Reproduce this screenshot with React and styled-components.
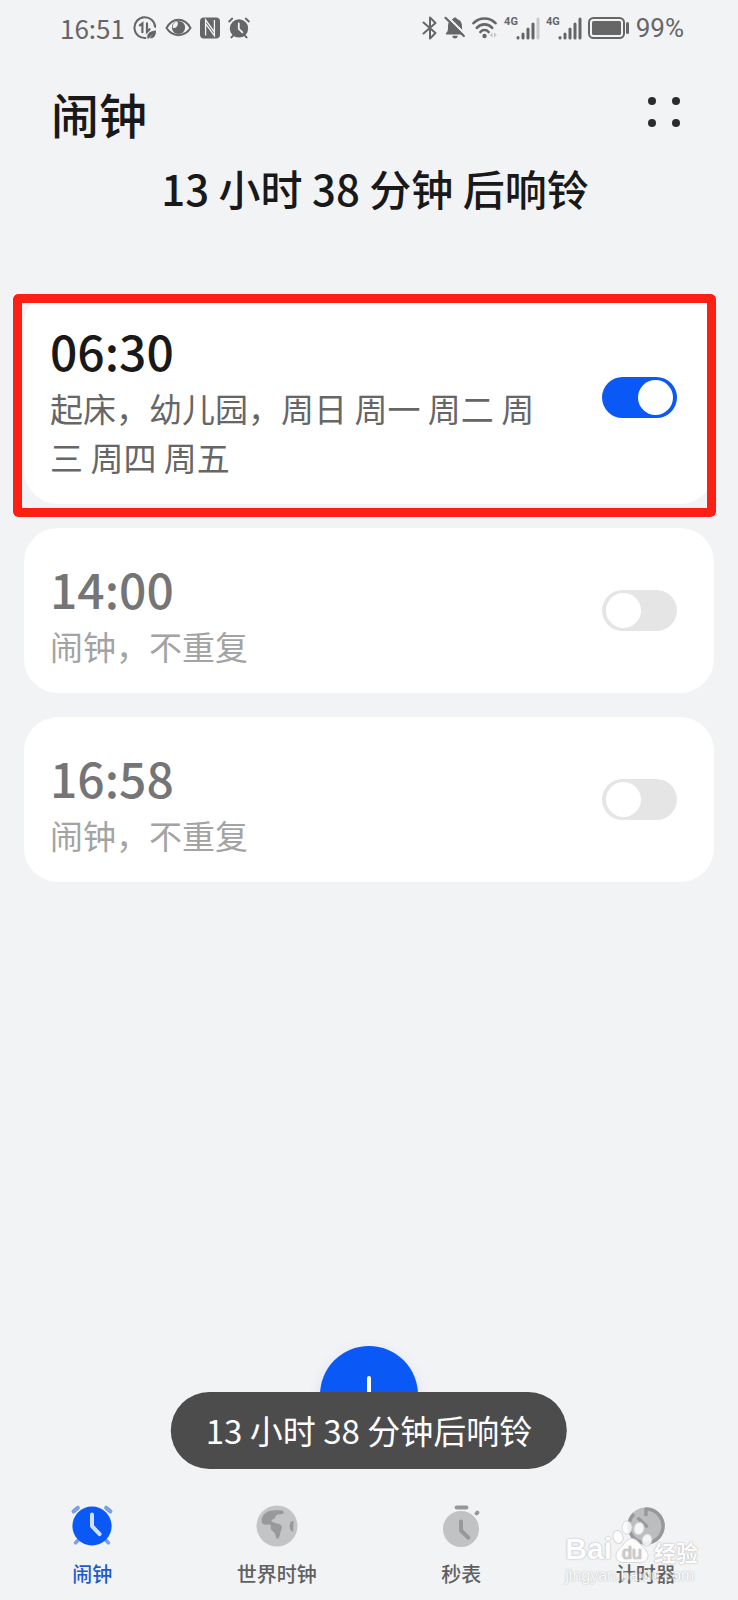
import { useState } from 'react';
import styled, { createGlobalStyle } from 'styled-components';

let GlobalStyle = createGlobalStyle`
    :root{
        --page_color:#f2f3f5;
        --accent_color:#0a59f7;
        --text_color:#191919;
        --status_color:#666666;
        --main_font:"Noto Sans CJK SC", "Noto Sans", sans-serif;
    }

    *{
        box-sizing:border-box;
    }

    body{
        margin:0;
        background:var(--page_color);
        color:var(--text_color);
        font-family:var(--main_font);
    }

    button{
        padding:0;
        border:none;
        background:none;
        color:inherit;
        font-family:inherit;
        cursor:pointer;
    }
`

let initialAlarms = [
    { id: 1, time: '06:30', label: '起床，幼儿园，周日 周一 周二 周三 周四 周五', on: true, marked: true },
    { id: 2, time: '14:00', label: '闹钟，不重复', on: false },
    { id: 3, time: '16:58', label: '闹钟，不重复', on: false },
];

/* status bar icons */

let DataSaverIcon = () => (
    <svg width='24' height='24' viewBox='0 0 24 24' fill='none' stroke='currentColor' strokeWidth='2' strokeLinecap='round'>
        <path d='M22.2 10.800A10.4 10.4 0 1 0 12.400 22' />
        <path d='M6.800 9.400 9.400 7.400v8.800M14 7.400v8.400l2.600-2.600' strokeWidth='2.200' />
        <path d='M14.400 22.400c-1-5 2.200-7.600 8.600-8 .2 5.200-2.200 8.400-6.400 7.800l3.200-4-4.400 4.600z' fill='currentColor' stroke='none' />
    </svg>
)

let EyeIcon = () => (
    <svg width='27' height='20' viewBox='0 0 27 20'>
        <path d='M1.500 10C7.500-1 19.500-1 25.500 10C19.500 19.500 7.500 19.500 1.500 10Z' fill='none' stroke='currentColor' strokeWidth='2' strokeLinejoin='round' />
        <circle cx='13.500' cy='9.500' r='6.600' fill='currentColor' />
        <path d='M12.400 3.600a4.400 4.400 0 0 1-4.600 6.400 6 6 0 0 1 4.600-6.400z' fill='#f2f3f5' />
    </svg>
)

let NfcIcon = () => (
    <svg width='20' height='22' viewBox='0 0 20 22'>
        <rect width='20' height='21' y='0.500' rx='4' fill='currentColor' />
        <path d='M5.600 18.500V2.800l8.800 12.400M14.400 3v15.700L5.600 6.600' fill='none' stroke='#f2f3f5' strokeWidth='1.300' />
    </svg>
)

let AlarmStatusIcon = () => (
    <svg width='22' height='22' viewBox='0 0 22 22' fill='none' stroke='currentColor' strokeLinecap='round' strokeWidth='2'>
        <circle cx='11' cy='11.400' r='9.200' fill='currentColor' stroke='none' />
        <path d='M1.200 4.400 4.200 1.600M20.800 4.400l-3-2.800M3.400 20.400l2-2M18.600 20.400l-2-2' />
        <path d='M10.800 6.400v5.400l3.600 3.600' stroke='#f2f3f5' strokeWidth='1.800' />
    </svg>
)

let BluetoothIcon = () => (
    <svg width='16' height='24' viewBox='0 0 16 24' fill='none' stroke='currentColor' strokeWidth='2' strokeLinejoin='round' strokeLinecap='round'>
        <path d='M1.500 6.500 13.500 17 8 22.500V1.500L13.500 7 1.500 17.500' />
    </svg>
)

let BellOffIcon = () => (
    <svg width='22' height='24' viewBox='0 0 22 24'>
        <path d='M3 18.500c-1.200 0-1.400-1-.6-1.800 1.400-1.400 1.600-2.600 1.600-6C4 6 6 3.800 9 3c.4-2 3.600-2 4 0 3.200.8 5 3.200 5 7.700 0 3.400.2 4.600 1.600 6 .8.800.6 1.800-.6 1.800z' fill='currentColor' />
        <path d='M8.400 19.800h5.200a2.600 2.600 0 0 1-5.200 0z' fill='currentColor' />
        <path d='M3.500.8 21.500 18.600' stroke='#f2f3f5' strokeWidth='2.200' />
        <path d='M1.500 1.800 19.800 20' stroke='currentColor' strokeWidth='2.200' strokeLinecap='round' />
    </svg>
)

let WifiIcon = () => (
    <svg width='26' height='24' viewBox='0 0 26 24' fill='none' stroke='currentColor' strokeWidth='2.600' strokeLinecap='round'>
        <path d='M1.500 7.200C7.500 1 17.500 1 23.500 7.200M4.800 11.800c4.200-4.600 11.200-4.600 15.400 0M8.400 16c2.200-2.600 6-2.600 8.200 0' />
        <circle cx='12.500' cy='20' r='2.200' fill='currentColor' stroke='none' />
        <path d='M20.500 16.400 17.600 19l2.900 2.600zM22 16.400l2.900 2.600-2.900 2.600z' fill='#c4c5c6' stroke='none' />
    </svg>
)

let SignalIcon = ({ weak }) => (
    <svg width='24' height='23' viewBox='0 0 24 23' stroke='currentColor' strokeWidth='3' strokeLinecap='round'>
        <path d='M2 20.500v.5M7 17v4M12 12v9M17 7v14' />
        <path d='M22 2v19' stroke={weak ? '#c9cacb' : 'currentColor'} />
    </svg>
)

let BatteryIcon = () => (
    <svg width='42' height='24' viewBox='0 0 42 24'>
        <rect x='1' y='2' width='35' height='20' rx='4.500' fill='none' stroke='currentColor' strokeWidth='2' />
        <rect x='4' y='5' width='29' height='14' rx='1.500' fill='currentColor' />
        <path d='M39.500 7.500v9' stroke='currentColor' strokeWidth='3' strokeLinecap='round' />
    </svg>
)

/* tab icons */

let AlarmTabIcon = () => (
    <svg width='44' height='44' viewBox='0 0 44 44' fill='none' strokeLinecap='round'>
        <path d='M3.600 7.400l4.200-3.600M40.400 7.400l-4.200-3.600' stroke='#7d9fe9' strokeWidth='4.200' />
        <path d='M5.600 38.800l4-4M38.400 38.800l-4-4' stroke='#7d9fe9' strokeWidth='3.600' />
        <circle cx='22' cy='22' r='19.600' fill='#0a59f7' />
        <path d='M22 10.500v11.600l7.600 8' stroke='#cfe0fb' strokeWidth='4' strokeLinejoin='round' />
    </svg>
)

let GlobeTabIcon = () => (
    <svg width='44' height='44' viewBox='0 0 44 44'>
        <circle cx='22' cy='22' r='20.500' fill='#c3c4c5' />
        <path d='M7 19c-1.600-5 2-10.400 7.600-12 3.600-1 8-.8 12.400-.4 2.400.4 2.400 3 0 3.400l-4.600.6c-1.800.4-1.400 2.400-2.600 3.600-1.200 1.200-3 .8-3.200 2.400-.2 1.400 1.800 1.200 2.600 2 1.400 1.200 4 .8 5.800 1.800 1.800.8 2.400 3 1.400 5-1.200 2.400-1 5-2.400 8-.8 1.800-2.400 1.800-3-.2-.6-2.400-1-4-2.800-5.600-2-1.800-3-3.200-2.400-5.200.4-1.400-1-2-3-1.800-2.600.2-5 .2-5.800-1.600z' fill='#98999a' />
        <path d='M38.600 17c-2.400-.8-4.200 2.400-4 5.600.2 3 2 5.400 3.600 5z' fill='#98999a' />
    </svg>
)

let StopwatchTabIcon = () => (
    <svg width='44' height='44' viewBox='0 0 44 44' fill='none' strokeLinecap='round'>
        <circle cx='22' cy='25' r='18' fill='#c1c2c3' />
        <path d='M17.600 3.600h9.800' stroke='#97989a' strokeWidth='4' />
        <path d='M37.600 9.400l.8-.8' stroke='#97989a' strokeWidth='4' />
        <path d='M22 17.500v9l7.200 7' stroke='#97989a' strokeWidth='4' strokeLinejoin='round' />
    </svg>
)

let TimerTabIcon = () => (
    <svg width='44' height='44' viewBox='0 0 44 44' fill='none'>
        <circle cx='22' cy='22' r='18.600' fill='#bcbdbe' />
        <path d='M22 12V5a17 17 0 1 1-12 5' stroke='#97989a' strokeWidth='3.400' strokeLinejoin='round' />
        <path d='M14.600 14.800l8 7.400' stroke='#97989a' strokeWidth='3.400' strokeLinecap='round' />
    </svg>
)

let PawLogo = () => (
    <svg width='42' height='44' viewBox='0 0 42 44' fill='#ffffff' stroke='#d2d3d4' strokeWidth='1'>
        <ellipse cx='6' cy='17' rx='5' ry='6.600' transform='rotate(-14 6 17)' />
        <ellipse cx='15' cy='7.500' rx='5' ry='6.600' />
        <ellipse cx='27' cy='8.500' rx='5' ry='6.400' transform='rotate(12 27 8.500)' />
        <ellipse cx='35' cy='20' rx='5' ry='6' transform='rotate(14 35 20)' />
        <path d='M20 18.500c4 0 6.500 3 9 6.500 3 4 7.500 6 7 11-.5 5-4 6.500-8 6.500H12c-5 0-8-2-8-7 0-4.500 4-6.500 7-10.500 2.500-3.500 5-6.500 9-6.500z' />
        <text x='20' y='39' textAnchor='middle' fontFamily='Liberation Sans, sans-serif' fontSize='18' fill='#c4c5c6' stroke='none'>du</text>
    </svg>
)

let tabs = [
    { name: '闹钟', Icon: AlarmTabIcon },
    { name: '世界时钟', Icon: GlobeTabIcon },
    { name: '秒表', Icon: StopwatchTabIcon },
    { name: '计时器', Icon: TimerTabIcon },
];

let App = () => {

    let [alarms, setAlarms] = useState(initialAlarms);
    let [tab, setTab] = useState('闹钟');

    let toggle = (id) => {
        setAlarms(alarms.map((a) => a.id === id ? { ...a, on: !a.on } : a));
    }

    return (
        <Page lang='zh-CN'>
            <GlobalStyle />
            <StatusBar>
                <StatusGroup $gap='8px'>
                    <Clock>16:51</Clock>
                    <DataSaverIcon />
                    <EyeIcon />
                    <NfcIcon />
                    <AlarmStatusIcon />
                </StatusGroup>
                <StatusGroup $gap='6px'>
                    <BluetoothIcon />
                    <BellOffIcon />
                    <WifiIcon />
                    <Signal><span>4G</span><SignalIcon weak /></Signal>
                    <Signal><span>4G</span><SignalIcon /></Signal>
                    <BatteryIcon />
                    <Percent>99%</Percent>
                </StatusGroup>
            </StatusBar>

            <Header>
                <h1>闹钟</h1>
                <MoreButton aria-label='更多'>
                    <i /><i /><i /><i />
                </MoreButton>
            </Header>
            <Countdown>13 小时 38 分钟 后响铃</Countdown>

            <AlarmList>
                {alarms.map((a) => (
                    <AlarmCard key={a.id}>
                        <AlarmInfo htmlFor={`alarm_${a.id}`} $on={a.on}>
                            <strong>{a.time}</strong>
                            <span>{a.label}</span>
                        </AlarmInfo>
                        <Switch type='checkbox' id={`alarm_${a.id}`} checked={a.on} onChange={() => toggle(a.id)} />
                        {a.marked && <Marker />}
                    </AlarmCard>
                ))}
            </AlarmList>

            <AddArea>
                <AddButton aria-label='添加闹钟'>
                    <svg width='42' height='42' viewBox='0 0 42 42' stroke='#ffffff' strokeWidth='4' strokeLinecap='round'>
                        <path d='M21 4v34M4 21h34' />
                    </svg>
                </AddButton>
                <Toast role='status'>13 小时 38 分钟后响铃</Toast>
            </AddArea>

            <TabBar>
                {tabs.map(({ name, Icon }) => (
                    <TabButton key={name} $active={tab === name} onClick={() => setTab(name)}>
                        <Icon />
                        {name}
                    </TabButton>
                ))}
                <Watermark>
                    <div><b>Bai</b><PawLogo /><em>经验</em></div>
                    <p>jingyan.baidu.com</p>
                </Watermark>
            </TabBar>
        </Page>
    )
}

let Page = styled.div`
    min-height:100vh;
    display:flex;
    flex-direction:column;
    background:var(--page_color);
`

let StatusBar = styled.div`
    height:56px;
    padding:0 54px 0 60px;
    display:flex;
    align-items:center;
    justify-content:space-between;
    color:var(--status_color);
`

let StatusGroup = styled.div`
    display:flex;
    align-items:center;
    gap:${({ $gap }) => $gap};
`

let Clock = styled.span`
    font-size:26px;
    line-height:32px;
`

let Percent = styled.span`
    font-family:Roboto, sans-serif;
    font-size:26px;
    line-height:32px;
`

let Signal = styled.div`
    display:flex;
    align-items:flex-start;

    span{
        margin-right:-2px;
        font-family:Roboto, sans-serif;
        font-size:11px;
        font-weight:700;
        line-height:10px;
    }
`

let Header = styled.header`
    padding:25px 54px 0 51px;
    display:flex;
    align-items:center;
    justify-content:space-between;

    h1{
        margin:0;
        font-size:48px;
        font-weight:500;
        line-height:64px;
    }
`

let MoreButton = styled.button`
    padding:4px 4px 6px;
    display:grid;
    grid-template-columns:8px 8px;
    gap:14px 16px;

    i{
        width:8px;
        height:8px;
        border-radius:50%;
        background:#2b2b2c;
    }
`

let Countdown = styled.p`
    margin:13px 24px 0 36px;
    font-size:42px;
    font-weight:500;
    line-height:60px;
    text-align:center;
`

let AlarmList = styled.main`
    flex:1;
    padding:72px 24px 24px;
    display:flex;
    flex-direction:column;
    gap:24px;
`

let AlarmCard = styled.section`
    position:relative;
    padding:34px 37px 22px 26px;
    display:flex;
    align-items:center;
    border-radius:34px;
    background:#ffffff;
`

let AlarmInfo = styled.label`
    flex:1;
    margin-right:48px;
    display:flex;
    flex-direction:column;
    gap:8px;

    strong{
        color:${({ $on }) => $on ? '#191919' : '#757575'};
        font-size:48px;
        font-weight:500;
        line-height:52px;
    }

    span{
        color:${({ $on }) => $on ? '#666666' : '#a3a3a3'};
        font-size:33px;
        line-height:49px;
    }
`

let Switch = styled.input`
    appearance:none;
    width:75px;
    height:41px;
    margin:0 0 12px;
    padding:3px 4px;
    display:flex;
    justify-content:flex-start;
    border-radius:21px;
    background:#e5e5e5;
    cursor:pointer;

    &::before{
        content:'';
        width:35px;
        height:35px;
        border-radius:50%;
        background:#ffffff;
    }

    &:checked{
        justify-content:flex-end;
        background:var(--accent_color);
    }
`

/* red frame drawn over the card, the outline hides the card edge behind it */
let Marker = styled.div`
    position:absolute;
    inset:4px -2px -13px -11px;
    border:9px solid #fb2013;
    border-radius:5px;
    outline:5px solid var(--page_color);
    pointer-events:none;
`

let AddArea = styled.div`
    position:relative;
    display:flex;
    justify-content:center;
    padding-bottom:50px;
`

let AddButton = styled.button`
    width:98px;
    height:98px;
    display:flex;
    align-items:center;
    justify-content:center;
    border-radius:50%;
    background:var(--accent_color);
    box-shadow:0 4px 14px rgba(10, 89, 247, 0.12);
`

let Toast = styled.div`
    position:absolute;
    top:46px;
    left:50%;
    transform:translateX(-50%);
    padding:14px 35px;
    border-radius:39px;
    background:#4d4c4c;
    color:#ffffff;
    font-size:33px;
    line-height:49px;
    white-space:nowrap;
`

let TabBar = styled.nav`
    position:relative;
    display:grid;
    grid-template-columns:repeat(4, 1fr);
    padding:10px 0 14px;
`

let TabButton = styled.button`
    display:flex;
    flex-direction:column;
    align-items:center;
    gap:14px;
    color:${({ $active }) => $active ? '#1b5bd0' : '#5f6061'};
    font-size:20px;
    font-weight:500;
    line-height:24px;
`

let Watermark = styled.div`
    position:absolute;
    right:40px;
    bottom:12px;
    color:#ffffff;
    opacity:0.85;
    pointer-events:none;
    text-shadow:0 0 1px #a8a9aa, 0 0 2px #b8b9ba;

    div{
        display:flex;
        align-items:flex-end;
    }

    b{
        font-family:"Liberation Sans", sans-serif;
        font-size:30px;
        line-height:30px;
    }

    em{
        font-size:22px;
        font-style:normal;
        font-weight:700;
        line-height:26px;
    }

    p{
        margin:0;
        font-family:"Liberation Sans", sans-serif;
        font-size:16px;
        line-height:24px;
        opacity:0.8;
    }
`

export default App;
